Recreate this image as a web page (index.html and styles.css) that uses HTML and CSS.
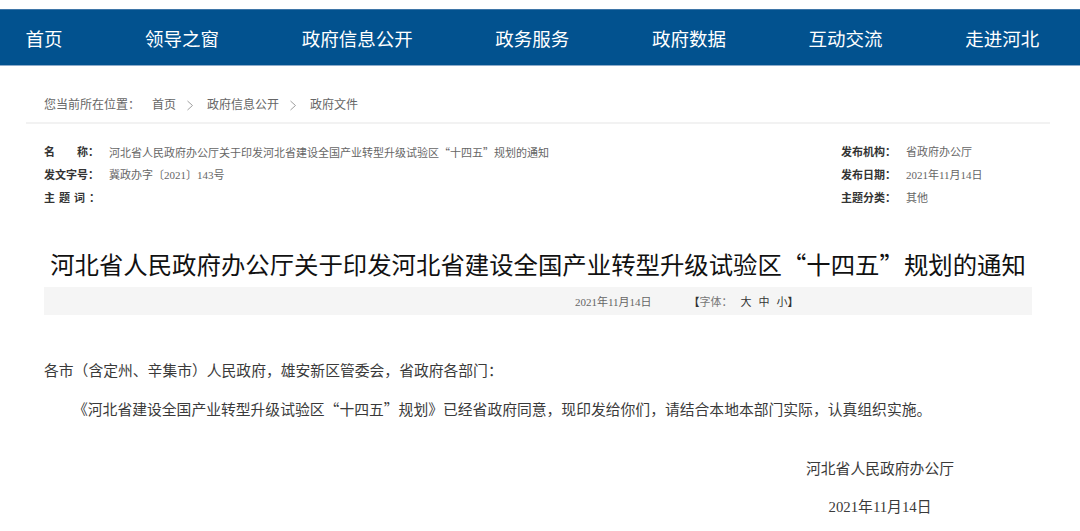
FILE: index.html
```html
<!DOCTYPE html>
<html lang="zh-CN">
<head>
<meta charset="utf-8">
<title>河北省人民政府办公厅关于印发河北省建设全国产业转型升级试验区“十四五”规划的通知</title>
<link rel="stylesheet" href="styles.css">
</head>
<body>
<nav class="nav">
  <a class="nav-item" href="#">首页</a>
  <a class="nav-item" href="#">领导之窗</a>
  <a class="nav-item" href="#">政府信息公开</a>
  <a class="nav-item" href="#">政务服务</a>
  <a class="nav-item" href="#">政府数据</a>
  <a class="nav-item" href="#">互动交流</a>
  <a class="nav-item" href="#">走进河北</a>
</nav>

<div class="main">
  <div class="crumb">
    <span class="crumb-label">您当前所在位置：</span>
    <a href="#">首页</a>
    <svg class="chev" width="8" height="11" viewBox="0 0 8 11"><path d="M1.5 1 L6.5 5.5 L1.5 10" fill="none" stroke="#a0a0a0" stroke-width="1"/></svg>
    <a href="#">政府信息公开</a>
    <svg class="chev" width="8" height="11" viewBox="0 0 8 11"><path d="M1.5 1 L6.5 5.5 L1.5 10" fill="none" stroke="#a0a0a0" stroke-width="1"/></svg>
    <a href="#">政府文件</a>
  </div>

  <div class="content">
    <div class="info">
      <div class="info-col">
        <div class="row"><span class="lbl">名　　称：</span><span class="val">河北省人民政府办公厅关于印发河北省建设全国产业转型升级试验区<span class="q">“</span>十四五<span class="q">”</span>规划的通知</span></div>
        <div class="row"><span class="lbl">发文字号：</span><span class="val">冀政办字〔2021〕143号</span></div>
        <div class="row"><span class="lbl lbl-spaced">主题词：</span><span class="val"></span></div>
      </div>
      <div class="info-col">
        <div class="row"><span class="lbl">发布机构：</span><span class="val">省政府办公厅</span></div>
        <div class="row"><span class="lbl">发布日期：</span><span class="val">2021年11月14日</span></div>
        <div class="row"><span class="lbl">主题分类：</span><span class="val">其他</span></div>
      </div>
    </div>

    <h1 class="title">河北省人民政府办公厅关于印发河北省建设全国产业转型升级试验区<span class="q">“</span>十四五<span class="q">”</span>规划的通知</h1>

    <div class="bar">
      <span class="bar-date">2021年11月14日</span>
      <span class="fontsize"><b>【</b><span class="fs-label">字体：</span><a href="#">大</a><a href="#">中</a><a href="#">小</a><b>】</b></span>
    </div>

    <div class="article">
      <p class="para">各市（含定州、辛集市）人民政府，雄安新区管委会，省政府各部门：</p>
      <p class="para indent">《河北省建设全国产业转型升级试验区<span class="q">“</span>十四五<span class="q">”</span>规划》已经省政府同意，现印发给你们，请结合本地本部门实际，认真组织实施。</p>
      <div class="sign">
        <p>河北省人民政府办公厅</p>
        <p>2021年11月14日</p>
      </div>
    </div>
  </div>
</div>
</body>
</html>
```

FILE: styles.css
```css
* { box-sizing: border-box; }

body {
  margin: 0;
  padding-top: 9px;
  background: #ffffff;
  font-family: "Liberation Serif", "Noto Sans CJK SC", serif;
  color: #333333;
}

a { color: inherit; text-decoration: none; }

.q { font-family: "Noto Sans CJK SC", sans-serif; }

/* navigation */
.nav {
  display: flex;
  align-items: center;
  gap: 82.6px;
  height: 57px;
  padding-left: 25.5px;
  background: #02528f;
  border-top: 1px solid #3f76a8;
  border-bottom: 1px solid #8eaccb;
}

.nav-item {
  font-family: "Noto Sans CJK SC", sans-serif;
  font-size: 18.5px;
  color: #ffffff;
  line-height: 24px;
}

/* main */
.main {
  width: 1024px;
  margin-left: 26px;
}

.crumb {
  display: flex;
  align-items: center;
  padding: 30px 18px 8px;
  height: 58px;
  font-size: 12px;
  line-height: 18px;
  color: #666666;
  border-bottom: 2px solid #f2f2f2;
}

.crumb-label { margin-right: 12px; }

.chev { margin: 0 13px 0 10px; }

.content { padding: 0 18px; }

.info {
  display: grid;
  grid-template-columns: 1fr 191px;
  padding-top: 17px;
  font-size: 11px;
}

.row {
  display: flex;
  height: 23px;
  line-height: 23px;
}

.lbl {
  width: 65px;
  flex: none;
  font-weight: bold;
  color: #333333;
}

.lbl-spaced { letter-spacing: 4px; }

.val { color: #666666; }

.title {
  margin: 36px 0 0;
  font-family: "Noto Sans CJK SC", sans-serif;
  font-size: 24.4px;
  font-weight: 400;
  line-height: 36px;
  text-align: center;
  color: #111111;
}

.bar {
  display: flex;
  align-items: center;
  height: 28px;
  margin-top: 5px;
  padding-left: 531px;
  background: #f5f5f5;
  font-size: 11px;
  color: #666666;
}

.fontsize {
  margin-left: 37px;
  display: flex;
  align-items: center;
}

.fontsize b { color: #333333; }

.fs-label { color: #777777; margin-right: 8px; }

.fontsize a { color: #333333; margin-right: 7px; }
.fontsize a:last-of-type { margin-right: 0; }

.article {
  padding-top: 38px;
  font-size: 14.8px;
  color: #3a3a3a;
}

.para {
  margin: 0;
  line-height: 37px;
}

.indent { text-indent: 29px; }

.sign {
  width: 170px;
  margin: 21px 67px 0 auto;
  text-align: center;
}

.sign p {
  margin: 0;
  line-height: 38px;
}
```
